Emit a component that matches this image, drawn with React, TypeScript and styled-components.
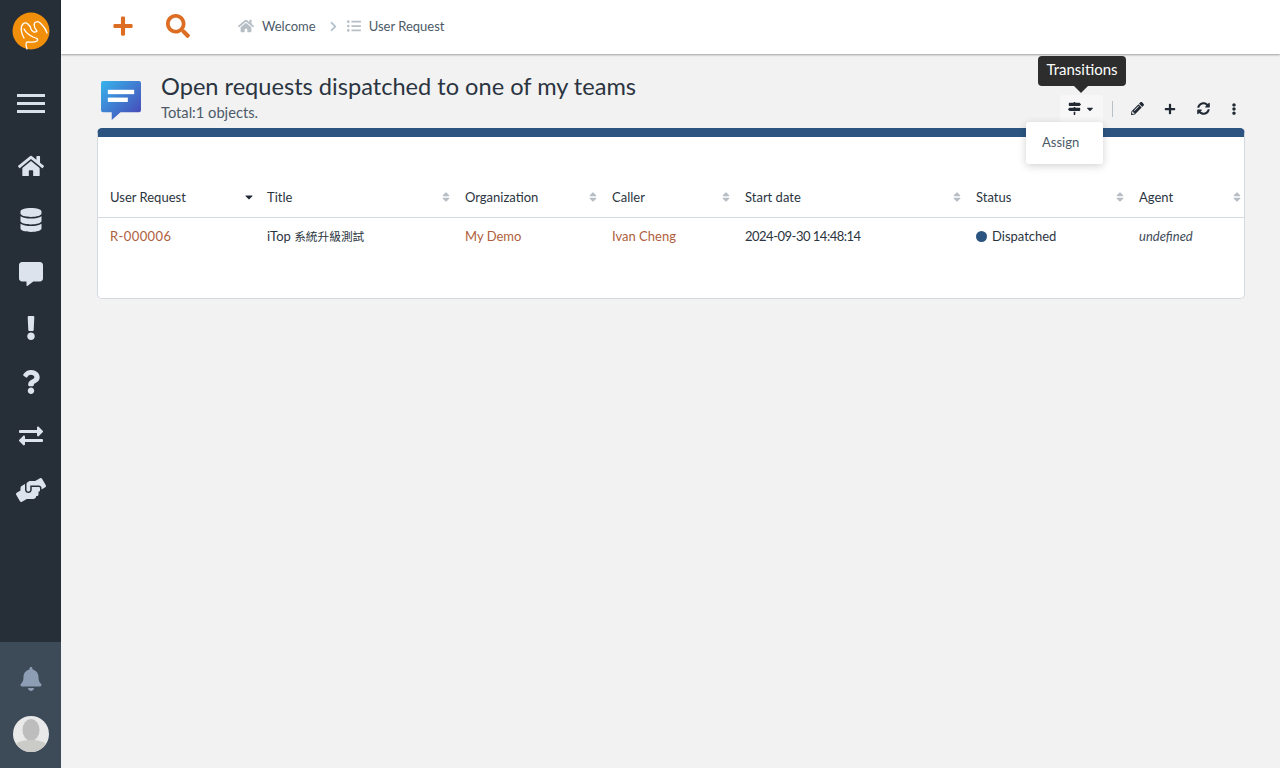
import styled, { createGlobalStyle } from "styled-components";
import {
  FaBell,
  FaCaretDown,
  FaChevronRight,
  FaCommentAlt,
  FaDatabase,
  FaEllipsisV,
  FaExchangeAlt,
  FaExclamation,
  FaHandsHelping,
  FaHome,
  FaListUl,
  FaMapSigns,
  FaPencilAlt,
  FaPlus,
  FaQuestion,
  FaSearch,
  FaSort,
  FaSyncAlt,
} from "react-icons/fa";

const Global = createGlobalStyle`
  html, body { margin: 0; height: 100%; }
  body {
    background: #f2f2f2;
    color: #2b3541;
    font-family: "Lato", "Noto Sans CJK TC", sans-serif;
  }
  #root { height: 100%; }
`;

const columns = [
  { label: "User Request", width: 157, sorted: true },
  { label: "Title", width: 198 },
  { label: "Organization", width: 147 },
  { label: "Caller", width: 133 },
  { label: "Start date", width: 231 },
  { label: "Status", width: 163 },
  { label: "Agent", width: 117 },
];

const navIcons = [
  { Icon: FaDatabase, size: 24 },
  { Icon: FaCommentAlt, size: 24 },
  { Icon: FaExclamation, size: 24 },
  { Icon: FaQuestion, size: 24 },
  { Icon: FaExchangeAlt, size: 24 },
  { Icon: FaHandsHelping, size: 30 },
];

export default function App() {
  return (
    <Page>
      <Global />
      <Sidebar>
        <LogoSlot>
          <Logo />
        </LogoSlot>
        <Burger>
          <BurgerBar />
          <BurgerBar />
          <BurgerBar />
        </Burger>
        <NavList>
          <NavItem>
            <FaHome size={26} />
          </NavItem>
          {navIcons.map(({ Icon, size }, i) => (
            <NavItem key={i}>
              <Icon size={size} />
            </NavItem>
          ))}
        </NavList>
        <SideFooter>
          <BellSlot>
            <FaBell size={24} />
          </BellSlot>
          <Avatar />
        </SideFooter>
      </Sidebar>

      <Main>
        <TopBar>
          <QuickAction>
            <FaPlus size={22} />
          </QuickAction>
          <QuickAction>
            <FaSearch size={24} />
          </QuickAction>
          <Breadcrumbs>
            <FaHome size={16} color="#b6bec6" />
            <Crumb>Welcome</Crumb>
            <FaChevronRight size={11} color="#b0bfca" />
            <FaListUl size={14} color="#b6bec6" />
            <Crumb>User Request</Crumb>
          </Breadcrumbs>
        </TopBar>

        <Content>
          <Header>
            <RequestIcon />
            <Titles>
              <Title>Open requests dispatched to one of my teams</Title>
              <Subtitle>Total:1 objects.</Subtitle>
            </Titles>
            <Toolbar>
              <Tooltip>Transitions</Tooltip>
              <TransitionButton>
                <FaMapSigns size={13} />
                <FaCaretDown size={10} />
              </TransitionButton>
              <Separator />
              <ToolIcon $left={18}>
                <FaPencilAlt size={13} />
              </ToolIcon>
              <ToolIcon $left={20}>
                <FaPlus size={12} />
              </ToolIcon>
              <ToolIcon $left={21}>
                <FaSyncAlt size={13} />
              </ToolIcon>
              <ToolIcon $left={18}>
                <FaEllipsisV size={12} />
              </ToolIcon>
              <Menu>Assign</Menu>
            </Toolbar>
          </Header>

          <Panel>
            <Table>
              <colgroup>
                {columns.map((c) => (
                  <col key={c.label} width={c.width} />
                ))}
              </colgroup>
              <thead>
                <tr>
                  {columns.map((c) => (
                    <HeadCell key={c.label}>
                      {c.label}
                      <SortMark $active={c.sorted}>
                        {c.sorted ? <FaCaretDown size={12} /> : <FaSort size={12} />}
                      </SortMark>
                    </HeadCell>
                  ))}
                </tr>
              </thead>
              <tbody>
                <tr>
                  <Cell>
                    <Link $wide>R-000006</Link>
                  </Cell>
                  <Cell>
                    iTop <Cjk>系統升級測試</Cjk>
                  </Cell>
                  <Cell>
                    <Link>My Demo</Link>
                  </Cell>
                  <Cell>
                    <Link>Ivan Cheng</Link>
                  </Cell>
                  <Cell>
                    <DateText>2024-09-30 14:48:14</DateText>
                  </Cell>
                  <Cell>
                    <StatusDot />
                    Dispatched
                  </Cell>
                  <Cell>
                    <em>undefined</em>
                  </Cell>
                </tr>
              </tbody>
            </Table>
          </Panel>
        </Content>
      </Main>
    </Page>
  );
}

function Logo() {
  return (
    <svg width="38" height="38" viewBox="0 0 38 38">
      <circle cx="19" cy="19" r="18.5" fill="#f18f0b" />
      <g fill="none" stroke="#fff" strokeWidth="1.3" strokeLinecap="round" strokeLinejoin="round">
        <path d="M12 26C9 21 8 15 11 12c3-3 7 1 8 5 1 3 4 4 6 2-3-3-4-8-1-9 3-2 5 2 7 4s3 4 4 7" />
        <path d="M12 17c2 4 5 6 9 8 3 1 6 2 4 4-3 2-7 1-10 1-2 1-1 4 0 7" />
      </g>
    </svg>
  );
}

function RequestIcon() {
  return (
    <svg width="40" height="39" viewBox="0 0 41 40" style={{ flex: "none" }}>
      <defs>
        <linearGradient id="req" x1="0" y1="0" x2="1" y2="1">
          <stop offset="0" stopColor="#36b4ec" />
          <stop offset="1" stopColor="#4a41b4" />
        </linearGradient>
      </defs>
      <path
        d="M2 0h37a2 2 0 0 1 2 2v28a2 2 0 0 1-2 2H20l-9 8v-8H2a2 2 0 0 1-2-2V2a2 2 0 0 1 2-2z"
        fill="url(#req)"
      />
      <rect x="7" y="9" width="27" height="4.5" fill="#fff" />
      <rect x="7" y="17" width="20.5" height="4.5" fill="#fff" />
    </svg>
  );
}

function Avatar() {
  return (
    <AvatarCircle>
      <svg width="36" height="36" viewBox="0 0 36 36">
        <circle cx="18" cy="18" r="18" fill="#e9e9e9" />
        <ellipse cx="18" cy="14" rx="8.5" ry="11" fill="#bdbdbd" />
        <path d="M3 28c3-3 9-4 15-4s12 1 15 4a18 18 0 0 1-30 0z" fill="#cbcbc7" />
      </svg>
    </AvatarCircle>
  );
}

const Page = styled.div`
  display: flex;
  height: 768px;
  overflow: hidden;
`;

const Sidebar = styled.aside`
  width: 61px;
  flex: none;
  display: flex;
  flex-direction: column;
  background: #262f38;
  color: #dce3ec;
`;

const LogoSlot = styled.div`
  display: flex;
  justify-content: center;
  padding-top: 12px;
  height: 42px;
  svg {
    display: block;
  }
`;

const Burger = styled.div`
  display: flex;
  flex-direction: column;
  align-items: center;
  gap: 5px;
  padding-top: 40px;
  height: 43px;
`;

const BurgerBar = styled.div`
  width: 28px;
  height: 3px;
  background: #d8e0ea;
`;

const NavList = styled.div`
  display: flex;
  flex-direction: column;
  padding-top: 2px;
`;

const NavItem = styled.div`
  height: 54px;
  display: flex;
  align-items: center;
  justify-content: center;
`;

const SideFooter = styled.div`
  margin-top: auto;
  height: 126px;
  background: #3d4a58;
  display: flex;
  flex-direction: column;
  align-items: center;
  color: #8d9db3;
`;

const BellSlot = styled.div`
  height: 74px;
  display: flex;
  align-items: center;
`;

const AvatarCircle = styled.div`
  width: 36px;
  height: 36px;
  svg {
    display: block;
  }
`;

const Main = styled.div`
  flex: 1;
  min-width: 0;
  display: flex;
  flex-direction: column;
`;

const TopBar = styled.header`
  height: 54px;
  flex: none;
  box-sizing: border-box;
  padding: 0 0 2px 51px;
  background: #fff;
  box-shadow: 0 1px 2px rgba(0, 0, 0, 0.35);
  display: flex;
  align-items: center;
  position: relative;
`;

const QuickAction = styled.div`
  display: flex;
  color: #dd6d22;
  margin-right: 32px;
`;

const Breadcrumbs = styled.nav`
  display: flex;
  align-items: center;
  margin-left: 16px;
  gap: 8px;
`;

const Crumb = styled.span`
  font-size: 13px;
  color: #4c5a68;
  margin-right: 4px;
`;

const Content = styled.main`
  padding: 0 35px 0 36px;
`;

const Header = styled.div`
  display: flex;
  align-items: flex-start;
  height: 74px;
  padding: 27px 0 0 4px;
  box-sizing: border-box;
`;

const Titles = styled.div`
  margin-left: 20px;
  margin-top: -11px;
`;

const Title = styled.h1`
  margin: 0;
  font-size: 23.6px;
  font-weight: 400;
  line-height: 32px;
  color: #2b3541;
`;

const Subtitle = styled.div`
  font-size: 14.7px;
  line-height: 20px;
  color: #4c5a68;
`;

const Toolbar = styled.div`
  margin-left: auto;
  position: relative;
  display: flex;
  align-items: center;
  height: 27px;
  margin-top: 14px;
  margin-right: 5px;
  color: #212934;
`;

const Tooltip = styled.div`
  position: absolute;
  left: -22px;
  top: -39px;
  width: 88px;
  height: 30px;
  line-height: 27px;
  text-align: center;
  border-radius: 4px;
  background: #2d2d2d;
  color: #fff;
  font-size: 15px;
  &::after {
    content: "";
    position: absolute;
    left: 36px;
    top: 30px;
    border: 7px solid transparent;
    border-bottom: 0;
    border-top-color: #2d2d2d;
  }
`;

const TransitionButton = styled.div`
  width: 43px;
  height: 27px;
  background: #f7f7f7;
  display: flex;
  align-items: center;
  justify-content: center;
  gap: 4px;
  border-radius: 3px 3px 0 0;
`;

const Separator = styled.div`
  width: 1px;
  height: 16px;
  background: #b8c0c8;
  margin-left: 9px;
`;

const ToolIcon = styled.div<{ $left: number }>`
  display: flex;
  margin-left: ${(p) => p.$left}px;
`;

const Menu = styled.div`
  position: absolute;
  left: -34px;
  top: 27px;
  width: 77px;
  height: 42px;
  box-sizing: border-box;
  padding: 12px 0 0 16px;
  background: #fff;
  border-radius: 3px;
  box-shadow: 0 2px 8px rgba(0, 0, 0, 0.18);
  font-size: 13px;
  color: #4c5a68;
  z-index: 2;
`;

const Panel = styled.section`
  height: 171px;
  box-sizing: border-box;
  background: #fff;
  border: 1px solid #d5dae0;
  border-top: 9px solid #2b5480;
  border-radius: 5px;
`;

const Table = styled.table`
  width: 1146px;
  margin-top: 35px;
  border-collapse: collapse;
  table-layout: fixed;
  font-size: 13px;
`;

const HeadCell = styled.th`
  position: relative;
  height: 45px;
  box-sizing: border-box;
  padding: 6px 12px 0;
  text-align: left;
  font-weight: 400;
  color: #2b3541;
  border-bottom: 1px solid #d5dae0;
`;

const SortMark = styled.span<{ $active?: boolean }>`
  position: absolute;
  right: ${(p) => (p.$active ? 0 : 1)}px;
  top: 19px;
  display: flex;
  color: ${(p) => (p.$active ? "#212934" : "#b8bec6")};
`;

const Cell = styled.td`
  height: 36px;
  padding: 0 12px;
  color: #2b3541;
  white-space: nowrap;
  em {
    color: #404b58;
  }
`;

const Link = styled.span<{ $wide?: boolean }>`
  color: #b0603c;
  letter-spacing: ${(p) => (p.$wide ? "0.4px" : "0")};
`;

const Cjk = styled.span`
  font-size: 11.7px;
`;

const DateText = styled.span`
  letter-spacing: -0.5px;
`;

const StatusDot = styled.span`
  display: inline-block;
  width: 11px;
  height: 11px;
  border-radius: 50%;
  background: #2b5480;
  margin-right: 5px;
  vertical-align: -1px;
`;
